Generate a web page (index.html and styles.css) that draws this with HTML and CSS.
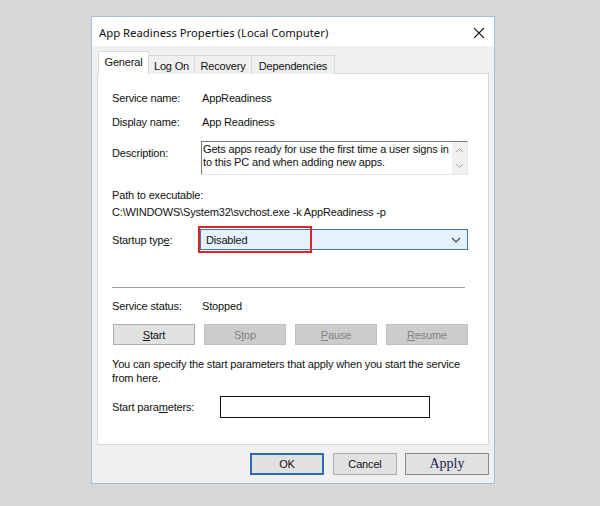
FILE: index.html
```html
<!DOCTYPE html>
<html>
<head>
<meta charset="utf-8">
<link rel="stylesheet" href="styles.css">
</head>
<body>
<div class="window">
  <div class="titlebar">
    <span class="title">App Readiness Properties (Local Computer)</span>
    <svg class="close" width="12" height="12" viewBox="0 0 12 12"><path d="M1 1 L11 11 M11 1 L1 11" stroke="#222" stroke-width="1.1" fill="none"/></svg>
  </div>
  <div class="client">
    <div class="tabs">
      <div class="tab active t-general">General</div>
      <div class="tab t-logon">Log On</div>
      <div class="tab t-recovery">Recovery</div>
      <div class="tab t-deps">Dependencies</div>
    </div>
    <div class="panel">
      <div class="row r-service"><span class="label">Service name:</span><span>AppReadiness</span></div>
      <div class="row r-display"><span class="label">Display name:</span><span>App Readiness</span></div>
      <div class="row r-desc">
        <span class="label desc-label">Description:</span>
        <div class="textarea">
          <div class="ta-text">Gets apps ready for use the first time a user signs in to this PC and when adding new apps.</div>
          <div class="scrollbar">
            <svg width="9" height="6" viewBox="0 0 9 6"><path d="M1 5 L4.5 1.5 L8 5" stroke="#a6a6a6" stroke-width="1" fill="none"/></svg>
            <svg width="9" height="6" viewBox="0 0 9 6"><path d="M1 1 L4.5 4.5 L8 1" stroke="#a6a6a6" stroke-width="1" fill="none"/></svg>
          </div>
        </div>
      </div>
      <div class="line r-pathlabel">Path to executable:</div>
      <div class="line r-path">C:\WINDOWS\System32\svchost.exe -k AppReadiness -p</div>
      <div class="row r-startup">
        <span class="label">Startup typ<u>e</u>:</span>
        <div class="select">
          <span>Disabled</span>
          <svg width="10" height="6" viewBox="0 0 10 6"><path d="M1 1 L5 5 L9 1" stroke="#444" stroke-width="1.1" fill="none"/></svg>
          <div class="highlight"></div>
        </div>
      </div>
      <div class="separator"></div>
      <div class="row r-status"><span class="label">Service status:</span><span>Stopped</span></div>
      <div class="svc-buttons">
        <div class="btn"><u>S</u>tart</div>
        <div class="btn disabled">S<u>t</u>op</div>
        <div class="btn disabled"><u>P</u>ause</div>
        <div class="btn disabled"><u>R</u>esume</div>
      </div>
      <div class="hint">You can specify the start parameters that apply when you start the service from here.</div>
      <div class="row r-params">
        <span class="label params-label">Start para<u>m</u>eters:</span>
        <div class="input"></div>
      </div>
    </div>
    <div class="dlg-buttons">
      <div class="btn ok">OK</div>
      <div class="btn cancel">Cancel</div>
      <div class="btn apply">Apply</div>
    </div>
  </div>
</div>
</body>
</html>
```

FILE: styles.css
```css
html, body {
  margin: 0;
  padding: 0;
}
body {
  background: #d8d8d8;
  width: 600px;
  height: 506px;
  padding: 16px 0 0 91px;
  box-sizing: border-box;
  font-family: "Liberation Sans", Arial, sans-serif;
  font-size: 11px;
  letter-spacing: -0.16px;
  color: #111;
}
.window {
  width: 404px;
  height: 468px;
  box-sizing: border-box;
  border: 1px solid #9fbfe0;
  background: #f0f0f0;
  display: flex;
  flex-direction: column;
}
.titlebar {
  height: 29px;
  background: #fff;
  display: flex;
  align-items: center;
  justify-content: space-between;
  padding: 0 9px 0 7px;
  flex-shrink: 0;
}
.title {
  font-family: "Noto Sans", "Open Sans", sans-serif;
  font-size: 11.3px;
  letter-spacing: 0;
  color: #111;
  padding-top: 2px;
}
.close {
  margin-top: 2px;
}
.client {
  flex: 1;
  padding: 6px 5px 0 5px;
  display: flex;
  flex-direction: column;
}
.tabs {
  display: flex;
  align-items: flex-end;
  height: 22px;
  position: relative;
  z-index: 1;
  margin-bottom: -1px;
}
.tab {
  height: 19px;
  box-sizing: border-box;
  border: 1px solid #d9d9d9;
  border-bottom: none;
  background: #f0f0f0;
  margin-left: -1px;
  display: flex;
  align-items: center;
  justify-content: center;
  padding-top: 1px;
}
.tab.active {
  height: 23px;
  background: #fff;
  margin-left: 1px;
  padding-top: 0;
  padding-bottom: 2px;
}
.t-general { width: 51px; }
.t-logon { width: 47px; }
.t-recovery { width: 58px; }
.t-deps { width: 84px; }
.panel {
  height: 372px;
  box-sizing: border-box;
  background: #fff;
  border: 1px solid #d9d9d9;
  padding: 17px 20px 0 14px;
  display: flex;
  flex-direction: column;
}
.row {
  display: flex;
  align-items: center;
}
.label {
  width: 90px;
  flex-shrink: 0;
}
.line, .row span {
  line-height: 14px;
}
.r-service { height: 14px; }
.r-display { height: 14px; margin-top: 10px; }
.r-desc {
  margin-top: 12px;
  align-items: flex-start;
}
.desc-label { margin-top: 5px; }
.textarea {
  width: 267px;
  height: 34px;
  box-sizing: border-box;
  border-top: 1px solid #7a7a7a;
  border-left: 1px solid #7a7a7a;
  border-right: 1px solid #e6e6e6;
  border-bottom: 1px solid #e6e6e6;
  margin-left: -1px;
  display: flex;
}
.ta-text {
  flex: 1;
  padding: 1px 2px 0 1px;
  line-height: 13px;
}
.scrollbar {
  width: 15px;
  background: #f0f0f0;
  display: flex;
  flex-direction: column;
  justify-content: space-between;
  align-items: center;
  padding: 5px 0 5px;
}
.r-pathlabel { margin-top: 13px; }
.r-path { margin-top: 3px; }
.r-startup { margin-top: 10px; }
.select {
  position: relative;
  width: 268px;
  height: 21px;
  box-sizing: border-box;
  margin-left: -2px;
  border: 1px solid #3d7ba6;
  background: #e5f1fb;
  display: flex;
  align-items: center;
  justify-content: space-between;
  padding: 0 6px 0 5px;
}
.highlight {
  position: absolute;
  left: -3px;
  top: -4px;
  width: 114px;
  height: 27px;
  box-sizing: border-box;
  border: 2px solid #d8262e;
}
.separator {
  margin-top: 37px;
  width: 353px;
  height: 1px;
  background: #a0a0a0;
  border-bottom: 1px solid #fff;
}
.r-status { margin-top: 10px; }
.svc-buttons {
  margin-top: 11px;
  width: 355px;
  margin-left: 1px;
  display: flex;
  justify-content: space-between;
}
.btn {
  height: 21px;
  box-sizing: border-box;
  border: 1px solid #adadad;
  background: #e1e1e1;
  display: flex;
  align-items: center;
  justify-content: center;
}
.svc-buttons .btn { width: 82px; }
.btn.disabled {
  background: #cccccc;
  border-color: #bfbfbf;
  color: #838383;
}
.hint {
  margin-top: 12px;
  line-height: 14px;
  width: 360px;
}
.r-params { margin-top: 11px; }
.params-label { width: 108px; }
.input {
  width: 210px;
  height: 22px;
  box-sizing: border-box;
  border: 1px solid #111;
  background: #fff;
}
.dlg-buttons {
  margin-top: 8px;
  display: flex;
  justify-content: flex-end;
  gap: 8px;
}
.dlg-buttons .btn { height: 22px; }
.ok {
  width: 74px;
  border-color: #2a6fab;
  border-width: 2px;
  margin-right: 1px;
}
.cancel { width: 64px; }
.apply {
  width: 84px;
  font-family: "Liberation Serif", "Times New Roman", serif;
  font-size: 14px;
  letter-spacing: 0;
  border-color: #8a8a8a;
  color: #1c1c4e;
}
```
